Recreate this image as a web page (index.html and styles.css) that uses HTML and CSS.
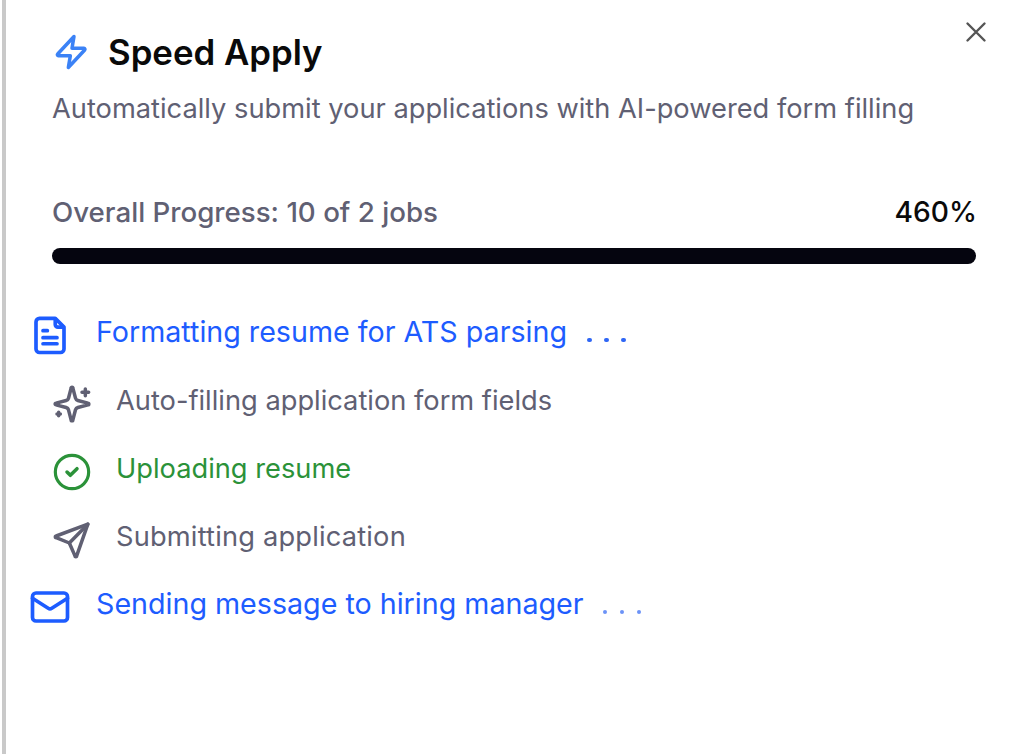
FILE: index.html
```html
<!DOCTYPE html>
<html lang="en">
<head>
  <meta charset="UTF-8">
  <title>Speed Apply</title>
  <link rel="stylesheet" href="styles.css">
</head>
<body>
  <div class="panel">
    <button class="close" aria-label="Close">
      <svg width="24" height="24" viewBox="0 0 24 24" fill="none" stroke="currentColor" stroke-width="2.4" stroke-linecap="round"><path d="M3.5 3.5l17 17M20.5 3.5l-17 17"/></svg>
    </button>

    <div class="title">
      <svg class="bolt" width="40" height="40" viewBox="0 0 24 24" fill="none" stroke="#3b82f6" stroke-width="2.1" stroke-linecap="round" stroke-linejoin="round"><path d="M13.2 2.7 3.4 13.2c-.4.4-.1 1 .4 1H11l-1.2 7.1 9.8-10.5c.4-.4.1-1-.4-1H12z"/></svg>
      <h1>Speed Apply</h1>
    </div>
    <p class="subtitle">Automatically submit your applications with AI-powered form filling</p>

    <div class="progress-head">
      <span>Overall Progress: 10 of 2 jobs</span>
      <span class="percent">460%</span>
    </div>
    <div class="bar"></div>

    <ul class="steps">
      <li class="step active">
        <svg width="42" height="42" viewBox="0 0 24 24" fill="none" stroke="currentColor" stroke-width="2.1" stroke-linecap="round" stroke-linejoin="round"><path d="M15 2.500H6a2 2 0 0 0-2 2v15.500a2 2 0 0 0 2 2h12a2 2 0 0 0 2-2V7.500z"/><path d="M15 3v3a1.500 1.500 0 0 0 1.500 1.500H19.500M8 9.500h2.500M8 13.500h8M8 17h8"/></svg>
        <span>Formatting resume for ATS parsing</span>
        <span class="dots"><i></i><i></i><i></i></span>
      </li>
      <li class="step">
        <svg width="40" height="40" viewBox="0 0 24 24" fill="none" stroke="currentColor" stroke-width="2.1" stroke-linecap="round" stroke-linejoin="round"><path d="M9.900 15.500A2 2 0 0 0 8.500 14.100l-6.100-1.600a.5.5 0 0 1 0-1l6.100-1.600a2 2 0 0 0 1.400-1.400l1.600-6.100a.5.5 0 0 1 1 0l1.600 6.100a2 2 0 0 0 1.400 1.400l6.100 1.600a.5.5 0 0 1 0 1l-6.100 1.600a2 2 0 0 0-1.400 1.400l-1.600 6.100a.5.5 0 0 1-1 0z"/><path d="M20 3v4M22 5h-4M4 17v2M5 18H3"/></svg>
        <span>Auto-filling application form fields</span>
      </li>
      <li class="step done">
        <svg width="40" height="40" viewBox="0 0 24 24" fill="none" stroke="currentColor" stroke-width="1.9" stroke-linecap="round" stroke-linejoin="round"><circle cx="12" cy="12" r="10"/><path d="m9 12 2 2 4-4" stroke-width="2.1"/></svg>
        <span>Uploading resume</span>
      </li>
      <li class="step wide">
        <svg width="40" height="40" viewBox="0 0 24 24" fill="none" stroke="currentColor" stroke-width="2.1" stroke-linecap="round" stroke-linejoin="round"><path d="M21.500 2.500 2.500 9.600a.5.5 0 0 0 0 1l7.900 3.200 3.400 7.700a.5.5 0 0 0 1 0z"/><path d="M21.500 2.500 10.400 13.800"/></svg>
        <span>Submitting application</span>
      </li>
      <li class="step active">
        <svg width="42" height="42" viewBox="0 0 24 24" fill="none" stroke="currentColor" stroke-width="2.1" stroke-linecap="round" stroke-linejoin="round"><rect x="2" y="4" width="20" height="16" rx="2"/><path d="m22 7-8.970 5.700a1.940 1.940 0 0 1-2.060 0L2 7"/></svg>
        <span>Sending message to hiring manager</span>
        <span class="dots faded"><i></i><i></i><i></i></span>
      </li>
    </ul>
  </div>
</body>
</html>
```

FILE: styles.css
```css
html, body {
  margin: 0;
  padding: 0;
  height: 100%;
  background-color: #fff;
}

body {
  font-family: Inter, 'Liberation Sans', sans-serif;
  overflow: hidden;
}

.panel {
  position: relative;
  box-sizing: border-box;
  height: 754px;
  margin-left: 2px;
  border-left: 4px solid #c9c9c9;
  padding: 32px 34px 0 46px;
}

.close {
  position: absolute;
  top: 20px;
  right: 22px;
  padding: 0;
  border: 0;
  background: none;
  color: #555;
  display: flex;
}

.title {
  display: flex;
  align-items: center;
  gap: 16px;
}

h1 {
  margin: 0;
  font-size: 34.800px;
  line-height: 40px;
  font-weight: 600;
  color: #0a0a0a;
}

.subtitle {
  margin: 19px 0 0;
  font-size: 27.250px;
  line-height: 36px;
  color: #606073;
}

.progress-head {
  display: flex;
  justify-content: space-between;
  margin-top: 67px;
  font-size: 27.700px;
  line-height: 36px;
  font-weight: 500;
  color: #606073;
}

.percent {
  margin-right: -1px;
  font-size: 28.200px;
  font-weight: 450;
  color: #0a0a0a;
}

.bar {
  height: 16px;
  margin-top: 18px;
  border-radius: 8px;
  background-color: #05050f;
}

.steps {
  list-style: none;
  margin: 34px 0 0 -23px;
  padding: 0;
}

.step {
  box-sizing: border-box;
  display: flex;
  align-items: center;
  height: 68px;
  padding-left: 23px;
  gap: 24px;
  font-size: 27.250px;
  color: #606073;
}

.step svg {
  margin-top: 8px;
}

.step.active {
  padding-left: 0;
  padding-bottom: 2px;
  gap: 25px;
  font-size: 28.650px;
  color: #1d5cff;
}

.step.done {
  color: #2b9239;
}

.step.wide {
  letter-spacing: 0.18px;
}

.dots {
  display: flex;
  gap: 12.500px;
  margin: 18px 0 0 -5px;
}

.dots i {
  width: 4.500px;
  height: 4.500px;
  border-radius: 50%;
  background-color: #2f66f5;
}

.dots.faded {
  margin-left: -6px;
  opacity: 0.7;
}
```
